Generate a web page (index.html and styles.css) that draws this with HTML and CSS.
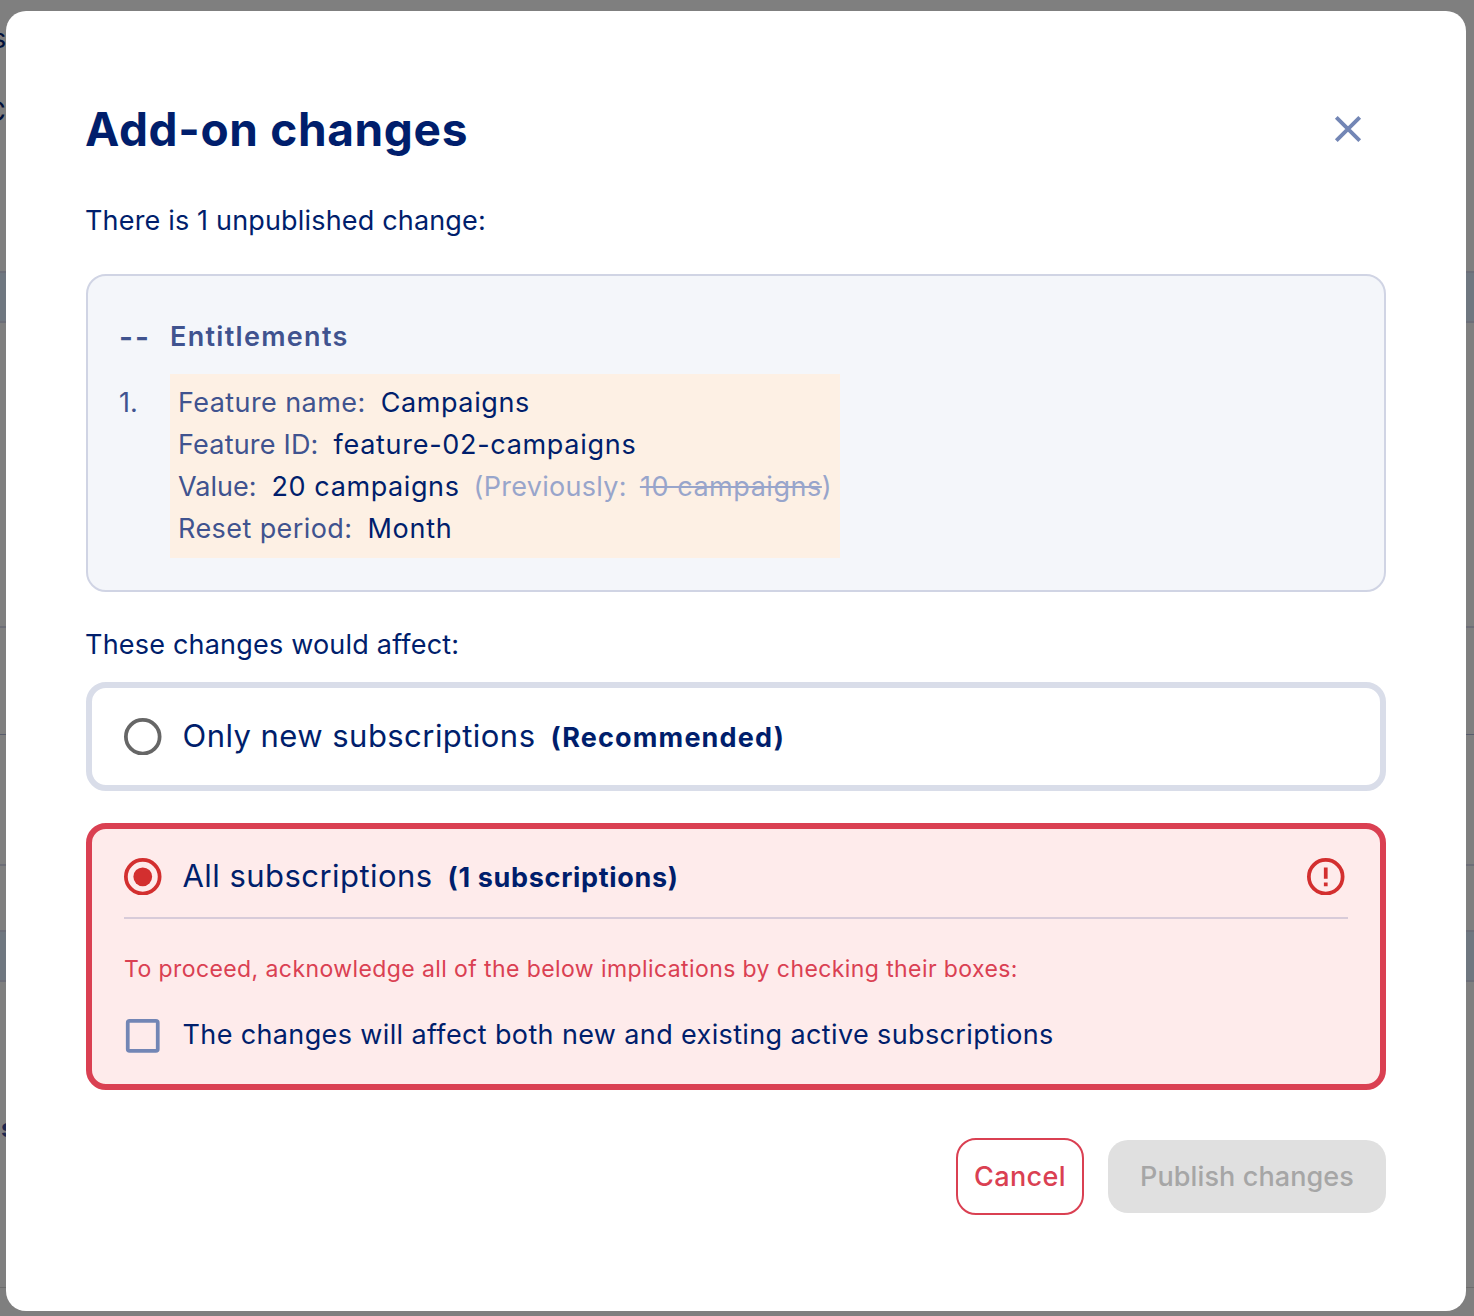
FILE: index.html
```html
<!DOCTYPE html>
<html lang="en">
<head>
<meta charset="utf-8">
<title>Add-on changes</title>
<link rel="stylesheet" href="styles.css">
</head>
<body>
<div class="page" aria-hidden="true">
  <div class="page-head">
    <span class="crumb">s</span>
    <span class="crumb crumb-cap">C</span>
  </div>
  <div class="band"></div>
  <div class="section tall"></div>
  <div class="section medium"></div>
  <div class="section dark"></div>
  <div class="section short"></div>
  <div class="band"></div>
  <div class="section last"><span class="section-name">s</span></div>
</div>
<div class="modal" role="dialog" aria-labelledby="title">
  <header class="modal-head">
    <h1 id="title">Add-on changes</h1>
    <button class="close" aria-label="Close">
      <svg width="28" height="28" viewBox="0 0 28 28"><path d="M2.3 2.3 25.7 25.7M25.7 2.3 2.3 25.7" stroke="#7386b5" stroke-width="3.9" fill="none"/></svg>
    </button>
  </header>
  <p class="text intro">There is 1 unpublished change:</p>

  <section class="changes">
    <div class="change-row head">
      <span class="marker dashes">--</span>
      <h2>Entitlements</h2>
    </div>
    <div class="change-row">
      <span class="marker number">1.</span>
      <div class="diff">
        <div class="field"><span class="label">Feature name:</span><span class="value">Campaigns</span></div>
        <div class="field"><span class="label tight">Feature ID:</span><span class="value wide">feature-02-campaigns</span></div>
        <div class="field"><span class="label tighter">Value:</span><span class="value">20 campaigns</span><span class="previous">(Previously:</span><span class="previous old"><del>10 campaigns</del>)</span></div>
        <div class="field"><span class="label">Reset period:</span><span class="value wide">Month</span></div>
      </div>
    </div>
  </section>

  <p class="text affect">These changes would affect:</p>

  <div class="option">
    <div class="option-head">
      <svg class="icon" viewBox="2 2 20 20"><circle cx="12" cy="12" r="9" fill="none" stroke="#666" stroke-width="2"/></svg>
      <span class="option-label"><span>Only new subscriptions</span><strong class="rec">(Recommended)</strong></span>
    </div>
  </div>

  <div class="option danger">
    <div class="option-head">
      <svg class="icon" viewBox="2 2 20 20"><circle cx="12" cy="12" r="9" fill="none" stroke="#d32f2f" stroke-width="2"/><circle cx="12" cy="12" r="5" fill="#d32f2f"/></svg>
      <span class="option-label"><span>All subscriptions</span><strong>(1 subscriptions)</strong></span>
      <svg class="icon alert" viewBox="2 2 20 20"><circle cx="12" cy="12" r="9" fill="none" stroke="#d32f2f" stroke-width="2"/><path d="M11 7h2v6h-2zM11 15h2v2h-2z" fill="#d32f2f"/></svg>
    </div>
    <p class="warning">To proceed, acknowledge all of the below implications by checking their boxes:</p>
    <label class="ack">
      <svg class="icon" viewBox="2 2 20 20"><rect x="4" y="4" width="16" height="16" rx="1" fill="none" stroke="#7386b5" stroke-width="2"/></svg>
      <span>The changes will affect both new and existing active subscriptions</span>
    </label>
  </div>

  <footer class="actions">
    <button class="btn cancel">Cancel</button>
    <button class="btn publish" disabled>Publish changes</button>
  </footer>
</div>
</body>
</html>
```

FILE: styles.css
```css
* { box-sizing: border-box; margin: 0; padding: 0; }
body {
  width: 1474px;
  height: 1316px;
  overflow: hidden;
  position: relative;
  padding: 11px 8px 5px 6px;
  background: #7f7f7f;
  color: #001e6c;
  font: 400 27px/42px Inter, sans-serif;
}

/* dimmed page behind the dialog */
.page { position: absolute; inset: 0; display: flex; flex-direction: column; color: #00103a; }
.page-head { height: 271px; padding-top: 18px; display: flex; flex-direction: column; gap: 31px; }
.crumb { margin-left: -8px; }
.crumb-cap { margin-left: -14px; }
.band { height: 52px; background: #6f7780; border: solid #6c6e78; border-width: 2px 0; flex: none; }
.section { border-bottom: 2px solid #6d6e77; flex: none; }
.tall { height: 305px; }
.medium { height: 107px; border-bottom: 1px solid #585c6c; }
.dark { height: 131px; }
.short { height: 64px; border: 0; }
.last { height: 306px; border-bottom: 1px solid #6d6d6d; padding-top: 125px; }
.section-name { margin-left: 1px; font-weight: 700; font-size: 25px; color: #1e2850; }

.modal {
  position: relative;
  height: 1300px;
  padding: 80px;
  border-radius: 20px;
  background: #fff;
}
.modal-head { display: flex; align-items: center; justify-content: space-between; height: 76px; }
h1 { font-size: 46px; font-weight: 700; line-height: 74px; letter-spacing: .66px; margin: -1px 0 0 -1px; }
.close { display: flex; border: 0; background: none; margin: 0 24.5px 0 0; }
.text { letter-spacing: .2px; margin-left: -1px; }
.intro { margin-top: 33px; letter-spacing: .17px; }

.changes {
  margin-top: 32px;
  height: 318px;
  padding: 40px 30px 0 31px;
  border: 2px solid #d0d4e4;
  border-radius: 20px;
  background: #f4f6fa;
  color: #40538f;
}
.change-row { display: flex; }
.marker { width: 51px; flex: none; }
.dashes { font-size: 30px; letter-spacing: 2px; }
.head { margin-bottom: 16px; font-weight: 600; }
h2 { font-size: 27px; font-weight: 600; letter-spacing: 1.3px; }
.number { padding-top: 8px; }
.diff { width: 670px; height: 184px; padding: 8px 7px 8px 8px; background: #fdf0e4; }
.field { display: flex; white-space: nowrap; letter-spacing: .42px; }
.label { margin-right: 15px; }
.tight { letter-spacing: .2px; margin-right: 15px; }
.tighter { letter-spacing: 0; margin-right: 15px; }
.value { color: #001e6c; letter-spacing: .6px; }
.value.wide { letter-spacing: .7px; }
.previous { color: #98a5cb; letter-spacing: .3px; margin-left: 14px; }
.old { margin-left: 13px; letter-spacing: .55px; }
del { text-decoration-thickness: 2px; }

.affect { margin-top: 32px; }
.option {
  margin-top: 16px;
  height: 109px;
  padding: 30px 32px 0;
  border: 6px solid #d9dde9;
  border-radius: 20px;
}
.option-head { display: flex; align-items: center; height: 37px; }
.icon { width: 37.5px; height: 37.5px; margin-right: 21px; flex: none; }
.option-label { display: flex; align-items: baseline; gap: 15px; font-size: 31px; letter-spacing: .45px; }
strong { font-size: 27px; font-weight: 700; letter-spacing: .67px; }
.rec { letter-spacing: 1.15px; }
.danger { margin-top: 32px; height: 267px; background: #feebeb; border-color: #da4052; }
.danger .option-head { height: 90px; margin-top: -30px; padding-top: 29px; border-bottom: 2px solid #d8cbd9; padding-bottom: 22px; }
.danger .option-label { margin-top: 1px; }
.icon.alert { margin: 0 3.5px 0 auto; }
.warning { margin-top: 32px; font-size: 23px; line-height: 36px; letter-spacing: .41px; color: #da4052; white-space: nowrap; }
.ack { display: flex; align-items: center; margin-top: 27px; letter-spacing: .37px; white-space: nowrap; }
.ack .icon { position: relative; top: .5px; }

.actions { display: flex; justify-content: flex-end; align-items: center; gap: 24px; margin-top: 48px; }
.btn { font: 500 27px/42px Inter, sans-serif; border-radius: 20px; }
.cancel { width: 128px; height: 77px; border: 2px solid #da4052; background: #fff; color: #da4052; letter-spacing: .4px; }
.publish { width: 278px; height: 73px; border: 0; background: #e0e0e0; color: #a6a6a6; letter-spacing: .1px; }
```
